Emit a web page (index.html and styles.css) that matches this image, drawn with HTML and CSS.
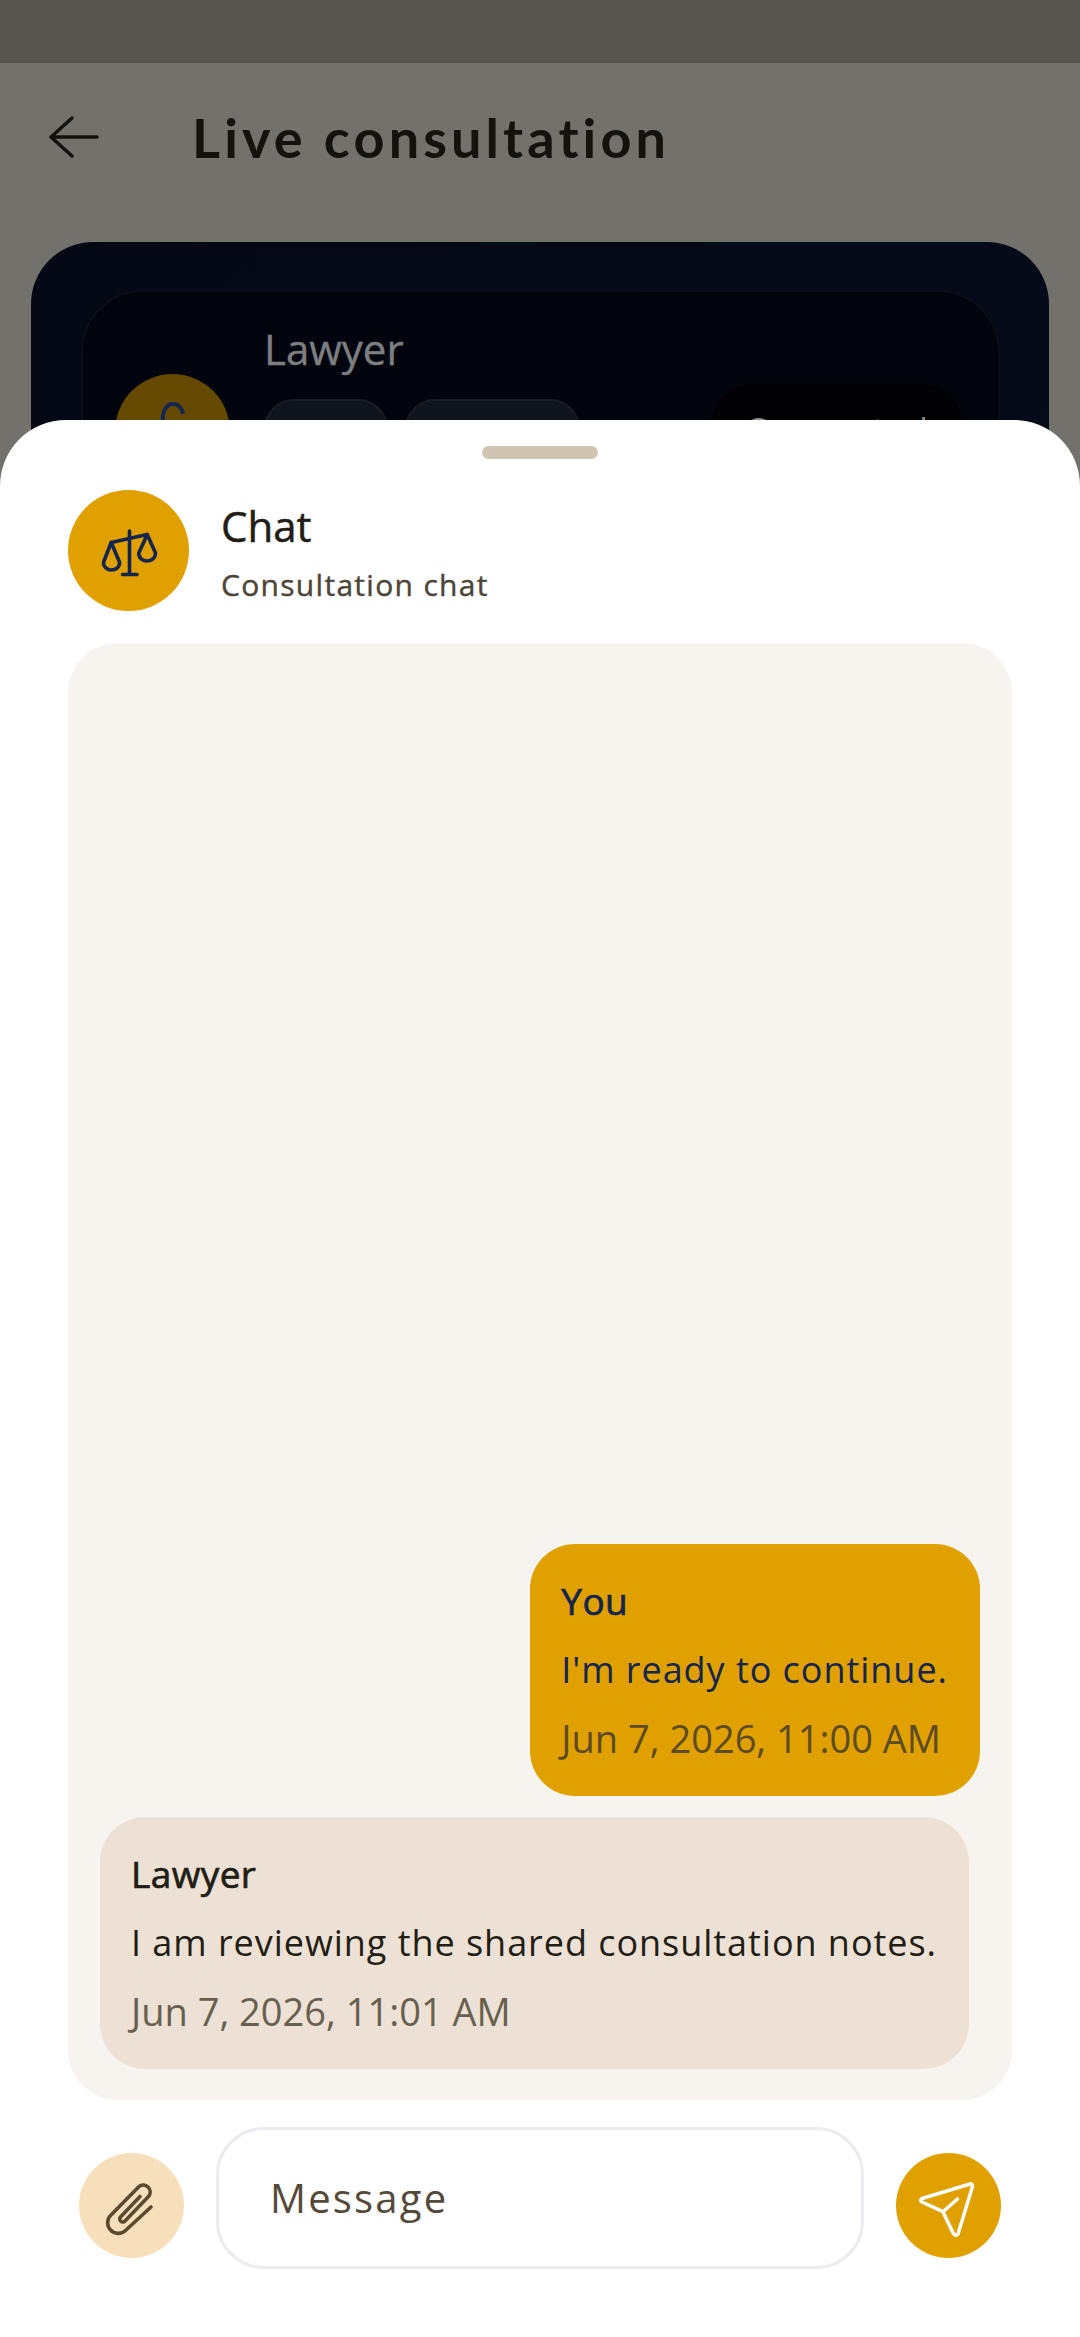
FILE: index.html
```html
<!DOCTYPE html>
<html lang="en">
  <head>
    <meta charset="UTF-8" />
    <meta name="viewport" content="width=device-width, initial-scale=1.0" />
    <title>Live consultation</title>
    <link rel="stylesheet" href="styles.css">
  </head>
  <body>
    <div class="screen">
      <div class="status-bar"></div>

      <header class="top-bar">
        <svg class="back-icon" viewBox="0 0 54 44" fill="none">
          <path d="M25 3 L4 22 L25 41 M4 22 H50" />
        </svg>
        <h1>Live consultation</h1>
      </header>

      <!-- Card behind the sheet, mostly hidden -->
      <section class="live-card">
        <div class="live-inner">
          <div class="live-avatar">
            <svg viewBox="0 0 115 115" fill="none"><path d="M47.7 46 C47.7 36 52 30 58 30 C63 30 67 34 68 40" /></svg>
          </div>
          <div class="live-info">
            <div class="live-name">Lawyer</div>
            <div class="chips">
              <span class="chip chip-short"></span>
              <span class="chip chip-long"></span>
            </div>
          </div>
          <div class="live-action">Connected</div>
        </div>
      </section>

      <!-- Bottom sheet -->
      <section class="sheet">
        <div class="handle"></div>

        <div class="chat-head">
          <div class="chat-badge">
            <svg viewBox="0 0 60 60" fill="none">
              <path d="M30.5 10 V53 M23.5 53.5 H38 M12.2 21.5 L48.2 13.5" />
              <path d="M12.2 21.5 L4.6 41 C4 46 8.5 49 12.5 49 C17 49 21 46 20.5 41 Z" />
              <path d="M48.2 13.5 L39.8 32 C39.5 37 43.5 40 48 40 C52.5 40 56.5 37 56.5 32 Z" />
            </svg>
          </div>
          <div>
            <div class="chat-title">Chat</div>
            <div class="chat-sub">Consultation chat</div>
          </div>
        </div>

        <div class="messages">
          <div class="bubble bubble-mine">
            <div class="sender">You</div>
            <div class="text">I'm ready to continue.</div>
            <div class="time">Jun 7, 2026, 11:00 AM</div>
          </div>
          <div class="bubble bubble-other">
            <div class="sender">Lawyer</div>
            <div class="text">I am reviewing the shared consultation notes.</div>
            <div class="time">Jun 7, 2026, 11:01 AM</div>
          </div>
        </div>

        <div class="composer">
          <button class="round-btn attach-btn">
            <svg viewBox="0 0 105 105" fill="none">
              <path d="M72 54 L46.5 77.5 A10.5 10.5 0 0 1 32 62 L60 33.5 A7 7 0 0 1 70 43 L46 68 A3 3 0 0 1 41.5 64 L61 43.5" />
            </svg>
          </button>
          <div class="message-input">Message</div>
          <button class="round-btn send-btn">
            <svg viewBox="0 0 105 105" fill="none">
              <path d="M74 31 L26 45.5 Q23 47 26 49 L47 58.7 L57 80 Q59.5 84 62 81 L76.5 33.5 Q76.5 30 74 31 Z M47 58.7 L61.5 46" />
            </svg>
          </button>
        </div>
      </section>
    </div>
  </body>
</html>
```

FILE: styles.css
```css
* {
  box-sizing: border-box;
}
body {
  margin: 0;
  font-family: "Open Sans", "Noto Sans", sans-serif;
  background: #72716b;
}
.screen {
  position: relative;
  height: 2337px;
  overflow: hidden;
  background: #72716b;
}
.status-bar {
  height: 63px;
  background: #56554f;
}
.top-bar {
  display: flex;
  align-items: center;
  height: 148px;
  padding: 0 0 0 47px;
}
.back-icon {
  width: 54px;
  height: 44px;
  margin-right: 91px;
}
.back-icon path {
  stroke: #14120d;
  stroke-width: 3.5;
  stroke-linecap: round;
  stroke-linejoin: round;
}
.top-bar h1 {
  margin: 0;
  font-family: Lato, sans-serif;
  font-size: 54px;
  font-weight: 700;
  letter-spacing: 4.1px;
  color: #14120d;
}
.live-card {
  margin: 31px 31px 0;
  height: 400px;
  padding: 48px 49px 0 50px;
  background: linear-gradient(135deg, #040814, #050b1a);
  border-radius: 62px;
}
.live-inner {
  display: flex;
  height: 300px;
  padding: 30px 35px 0 32px;
  background: #02050e;
  border: 2px solid #0b0e17;
  border-radius: 62px;
}
.live-avatar {
  flex: none;
  width: 115px;
  height: 115px;
  margin-top: 52px;
  background: #664900;
  border-radius: 50%;
}
.live-avatar svg {
  display: block;
  width: 115px;
  height: 115px;
}
.live-avatar path {
  stroke: #14254f;
  stroke-width: 4;
}
.live-info {
  margin-left: 34px;
}
.live-name {
  font-size: 42px;
  line-height: 54px;
  -webkit-text-stroke: 0.4px #7d7e80;
  color: #7d7e80;
}
.chips {
  display: flex;
  gap: 17px;
  margin-top: 23px;
}
.chip {
  height: 60px;
  background: #10141c;
  border: 2px solid #191d24;
  border-radius: 30px;
}
.chip-short {
  width: 124px;
}
.chip-long {
  width: 175px;
}
.live-action {
  width: 252px;
  height: 90px;
  margin: 62px 0 0 auto;
  padding-top: 23px;
  font-size: 34px;
  letter-spacing: 1.5px;
  text-align: center;
  color: #8a8a8a;
  background: #010103;
  border-radius: 42px;
}
.sheet {
  position: absolute;
  top: 420px;
  left: 0;
  right: 0;
  bottom: 0;
  display: flex;
  flex-direction: column;
  background: #fff;
  border-radius: 66px 66px 0 0;
}
.handle {
  align-self: center;
  width: 116px;
  height: 13px;
  margin-top: 26px;
  background: #d0c4b2;
  border-radius: 7px;
}
.chat-head {
  display: flex;
  align-items: center;
  gap: 32px;
  margin-top: 31px;
  padding-left: 68px;
}
.chat-badge {
  display: flex;
  align-items: center;
  justify-content: center;
  width: 121px;
  height: 121px;
  background: #e0a000;
  border-radius: 50%;
}
.chat-badge svg {
  width: 60px;
  height: 60px;
}
.chat-badge path {
  stroke: #14254f;
  stroke-width: 3.6;
  stroke-linecap: round;
  stroke-linejoin: round;
}
.chat-title {
  padding-top: 1px;
  font-size: 42px;
  line-height: 56px;
  -webkit-text-stroke: 0.5px #221e16;
  color: #221e16;
}
.chat-sub {
  margin-top: 11px;
  font-size: 30px;
  line-height: 40px;
  letter-spacing: 1.3px;
  -webkit-text-stroke: 0.4px #4d4538;
  color: #4d4538;
}
.messages {
  flex: 1;
  display: flex;
  flex-direction: column;
  justify-content: flex-end;
  gap: 21px;
  margin: 32px 68px 0;
  padding: 0 32px 31px;
  background: #f7f4ef;
  border-radius: 50px;
}
.bubble {
  width: fit-content;
  padding: 33px 32px 32px 31px;
  border-radius: 45px;
}
.bubble-mine {
  align-self: flex-end;
  background: #e0a000;
  color: #14254f;
}
.bubble-other {
  background: #ede1d5;
  color: #221e16;
}
.sender {
  font-size: 37px;
  line-height: 48px;
  -webkit-text-stroke: 0.7px currentColor;
  letter-spacing: 0.4px;
}
.text {
  margin-top: 21px;
  font-size: 36px;
  line-height: 48px;
  letter-spacing: 0.96px;
}
.time {
  margin-top: 19px;
  font-size: 38px;
  line-height: 51px;
  color: #67604f;
}
.bubble-mine .time {
  color: #5c4b25;
}
.composer {
  display: flex;
  align-items: flex-end;
  gap: 32px;
  height: 237px;
  padding: 26px 79px 0;
}
.round-btn {
  flex: none;
  width: 105px;
  height: 105px;
  margin-bottom: 79px;
  padding: 0;
  border: 0;
  border-radius: 50%;
}
.round-btn svg {
  display: block;
  width: 105px;
  height: 105px;
}
.round-btn path {
  stroke-linecap: round;
  stroke-linejoin: round;
}
.attach-btn {
  background: #f8dfbb;
}
.attach-btn path {
  stroke: #5a4a30;
  stroke-width: 3.6;
}
.send-btn {
  background: #e0a000;
}
.send-btn path {
  stroke: #fff;
  stroke-width: 3.5;
}
.message-input {
  flex: 1;
  height: 142px;
  margin-bottom: 68px;
  padding: 41px 51px 0;
  font-size: 40px;
  line-height: 54px;
  letter-spacing: 2.2px;
  color: #55493a;
  background: #fff;
  border: 3px solid #ecebf0;
  border-radius: 48px;
}
```
